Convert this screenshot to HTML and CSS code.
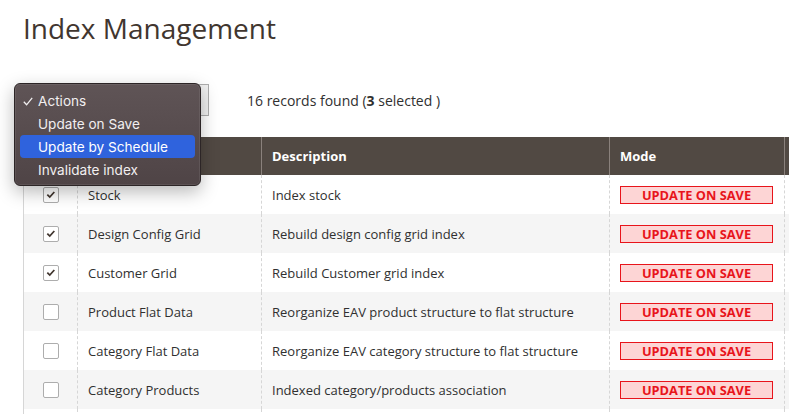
FILE: index.html
```html
<!DOCTYPE html>
<html>
<head>
<meta charset="utf-8">
<link rel="stylesheet" href="styles.css">
</head>
<body>
<div class="page">
  <h1 class="title">Index Management</h1>
  <div class="toolbar">
    <div class="select-wrap">
      <div class="select"></div>
      <div class="menu">
        <div class="menu-item"><svg class="check" viewBox="0 0 10 9"><path d="M0.8 4.8 L3.6 7.8 L9.2 0.8" /></svg>Actions</div>
        <div class="menu-item">Update on Save</div>
        <div class="menu-item active">Update by Schedule</div>
        <div class="menu-item">Invalidate index</div>
      </div>
    </div>
    <div class="records">16 records found (<b>3</b> selected )</div>
  </div>
  <div class="grid">
    <div class="row head">
      <div class="cell c1"></div>
      <div class="cell c2"></div>
      <div class="cell c3">Description</div>
      <div class="cell c4">Mode</div>
      <div class="cell c5"></div>
    </div>
    <div class="row">
      <div class="cell c1"><span class="cb on"><svg viewBox="0 0 16 16"><path d="M3.8 7.6 L6.6 10.4 L11.8 4.6" /></svg></span></div>
      <div class="cell c2">Stock</div>
      <div class="cell c3">Index stock</div>
      <div class="cell c4"><span class="badge">UPDATE ON SAVE</span></div>
      <div class="cell c5"></div>
    </div>
    <div class="row alt">
      <div class="cell c1"><span class="cb on"><svg viewBox="0 0 16 16"><path d="M3.8 7.6 L6.6 10.4 L11.8 4.6" /></svg></span></div>
      <div class="cell c2">Design Config Grid</div>
      <div class="cell c3">Rebuild design config grid index</div>
      <div class="cell c4"><span class="badge">UPDATE ON SAVE</span></div>
      <div class="cell c5"></div>
    </div>
    <div class="row">
      <div class="cell c1"><span class="cb on"><svg viewBox="0 0 16 16"><path d="M3.8 7.6 L6.6 10.4 L11.8 4.6" /></svg></span></div>
      <div class="cell c2">Customer Grid</div>
      <div class="cell c3">Rebuild Customer grid index</div>
      <div class="cell c4"><span class="badge">UPDATE ON SAVE</span></div>
      <div class="cell c5"></div>
    </div>
    <div class="row alt">
      <div class="cell c1"><span class="cb"></span></div>
      <div class="cell c2">Product Flat Data</div>
      <div class="cell c3">Reorganize EAV product structure to flat structure</div>
      <div class="cell c4"><span class="badge">UPDATE ON SAVE</span></div>
      <div class="cell c5"></div>
    </div>
    <div class="row">
      <div class="cell c1"><span class="cb"></span></div>
      <div class="cell c2">Category Flat Data</div>
      <div class="cell c3">Reorganize EAV category structure to flat structure</div>
      <div class="cell c4"><span class="badge">UPDATE ON SAVE</span></div>
      <div class="cell c5"></div>
    </div>
    <div class="row alt">
      <div class="cell c1"><span class="cb"></span></div>
      <div class="cell c2">Category Products</div>
      <div class="cell c3">Indexed category/products association</div>
      <div class="cell c4"><span class="badge">UPDATE ON SAVE</span></div>
      <div class="cell c5"></div>
    </div>
    <div class="row">
      <div class="cell c1"></div>
      <div class="cell c2"></div>
      <div class="cell c3"></div>
      <div class="cell c4"></div>
      <div class="cell c5"></div>
    </div>
  </div>
</div>
</body>
</html>
```

FILE: styles.css
```css
html, body {
  margin: 0;
  padding: 0;
  background: #fff;
  overflow: hidden;
  width: 789px;
  height: 414px;
}
.page {
  padding-left: 23px;
  font-family: "Open Sans", "Noto Sans", sans-serif;
  color: #303030;
  width: 766px;
  height: 414px;
  overflow: hidden;
}
.title {
  margin: 11px 0 0 0;
  font-size: 28px;
  line-height: 34px;
  font-weight: 400;
  color: #41362f;
}
.toolbar {
  display: flex;
  align-items: center;
  margin-top: 39px;
  height: 32px;
}
.select-wrap {
  position: relative;
  width: 186px;
  height: 32px;
}
.select {
  box-sizing: border-box;
  width: 186px;
  height: 32px;
  border: 1px solid #adadad;
  background: #f0f0f0;
}
.menu {
  position: absolute;
  left: -9px;
  top: -1px;
  width: 187px;
  height: 103px;
  box-sizing: border-box;
  padding: 5px 5px;
  border-radius: 6px;
  background: linear-gradient(180deg, #5f5456 0%, #4f4446 100%);
  border: 1px solid #2c2526;
  box-shadow: 0 0 0 1px rgba(255,255,255,0.08) inset, 0 6px 18px rgba(0,0,0,0.28);
  font-family: "Inter", "Liberation Sans", sans-serif;
  font-size: 13.6px;
  color: #f2eff0;
  z-index: 5;
}
.menu-item {
  position: relative;
  height: 23px;
  line-height: 24px;
  padding-left: 18px;
  border-radius: 4px;
}
.menu-item.active {
  background: #2f63dd;
  color: #fff;
}
.check {
  position: absolute;
  left: 3px;
  top: 8px;
  width: 10px;
  height: 9px;
  fill: none;
  stroke: #f2eff0;
  stroke-width: 1.3;
}
.records {
  margin-left: 38px;
  font-size: 14px;
  color: #303030;
}
.records b {
  font-weight: 700;
}
.grid {
  margin-top: 21px;
  border-left: 1px solid #d6d6d6;
  width: 1000px;
}
.row {
  display: flex;
  height: 39px;
  background: #fff;
}
.row.alt {
  background: #f5f5f5;
}
.row.head {
  height: 38px;
  background: #514943;
  color: #fff;
  font-weight: 700;
}
.cell {
  box-sizing: border-box;
  display: flex;
  align-items: center;
  padding-left: 10px;
  font-size: 13px;
  border-right: 1px dashed #d6d6d6;
}
.row.head .cell {
  border-right: 1px solid #8a817c;
}
.c1 { width: 54px; justify-content: center; padding-left: 0; }
.c2 { width: 184px; }
.c3 { width: 348px; }
.c4 { width: 175px; }
.c5 { width: 200px; }
.cb {
  box-sizing: border-box;
  width: 16px;
  height: 16px;
  border: 1px solid #adadad;
  border-radius: 2px;
  background: #fff;
  display: block;
}
.cb svg {
  display: block;
  width: 14px;
  height: 14px;
  fill: none;
  stroke: #41362f;
  stroke-width: 2;
}
.badge {
  box-sizing: border-box;
  width: 153px;
  height: 18px;
  border: 1px solid #e8141b;
  background: #fdd5d5;
  color: #e8141b;
  font-weight: 700;
  font-size: 12.8px;
  line-height: 16px;
  text-align: center;
}
```
